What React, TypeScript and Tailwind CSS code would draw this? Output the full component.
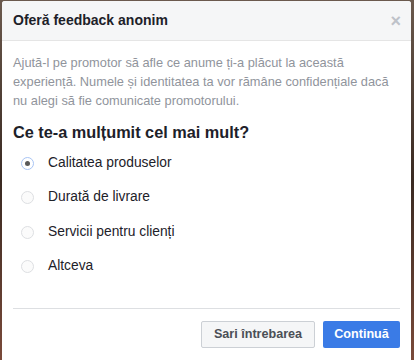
import React from "react";

const options = [
  "Calitatea produselor",
  "Durată de livrare",
  "Servicii pentru clienți",
  "Altceva",
];

export default function App() {
  const selected = 0;

  return (
    <div
      className="w-[414px] h-[360px] overflow-hidden bg-gradient-to-b from-[#6b5a4e] via-[#3a2a22] to-[#7a4a3a] pl-[2px] pt-[1px]"
      style={{ fontFamily: '"Liberation Sans", Arial, sans-serif' }}
    >
      <div className="w-[409px] h-[380px] bg-white rounded-t-[3px] flex flex-col">
        <div className="h-[40px] bg-[#f5f6f7] border-b border-[#e5e5e5] flex items-center justify-between pl-[11px] pr-[10px] rounded-t-[3px]">
          <h1 className="text-[14px] font-bold text-[#1d2129]">Oferă feedback anonim</h1>
          <button className="text-[#bec2c9] text-[18px] leading-none font-bold">×</button>
        </div>

        <div className="px-[11px] pt-[12px]">
          <p className="text-[12.8px] leading-[19px] text-[#90949c]">
            Ajută-l pe promotor să afle ce anume ți-a plăcut la această
            <br />
            experiență. Numele și identitatea ta vor rămâne confidențiale dacă
            <br />
            nu alegi să fie comunicate promotorului.
          </p>
          <h2 className="mt-[13px] text-[16.3px] leading-[19px] font-bold text-[#1d2129]">
            Ce te-a mulțumit cel mai mult?
          </h2>

          <div className="mt-[4px] flex flex-col">
            {options.map((label, i) => (
              <label key={label} className="h-[34.5px] flex items-center gap-[14px] pl-[8px]">
                <span
                  className={
                    i === selected
                      ? "w-[13px] h-[13px] rounded-full border border-[#a8c4f4] bg-white flex items-center justify-center"
                      : "w-[13px] h-[13px] rounded-full border border-[#dddfe2] bg-[#fbfbfb]"
                  }
                >
                  {i === selected && <span className="w-[5px] h-[5px] rounded-full bg-[#5a5a5a]" />}
                </span>
                <span className="text-[13.8px] text-[#1d2129]">{label}</span>
              </label>
            ))}
          </div>

          <div className="mt-[24px] border-t border-[#dddfe2]" />

          <div className="pt-[12px] flex justify-end gap-[8px]">
            <button className="h-[27px] w-[114px] rounded-[2px] border border-[#ccd0d5] bg-[#f5f6f7] text-[12.6px] font-bold text-[#4b4f56]">
              Sari întrebarea
            </button>
            <button className="h-[27px] w-[77px] rounded-[2px] bg-[#3a7be6] text-[12.6px] font-bold text-white">
              Continuă
            </button>
          </div>
        </div>
      </div>
    </div>
  );
}
